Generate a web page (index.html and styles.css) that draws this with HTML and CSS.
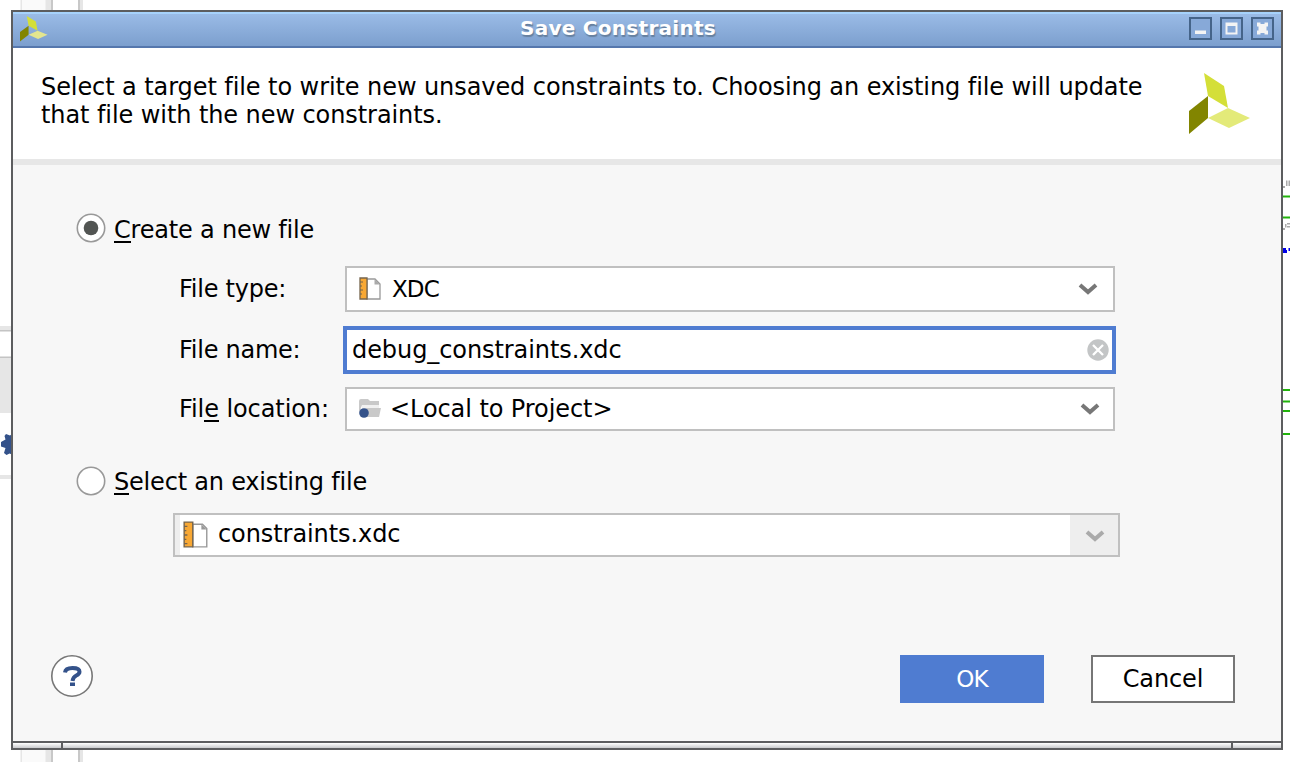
FILE: index.html
```html
<!DOCTYPE html>
<html lang="en">
<head>
<meta charset="utf-8">
<title>Save Constraints</title>
<link rel="stylesheet" href="styles.css">
</head>
<body>
<svg class="backdrop" width="1290" height="762" viewBox="0 0 1290 762" aria-hidden="true">
  <g>
    <path fill="#fafafa" d="M22 0h24v762H22z"/>
    <path fill="#e6e6e6" d="M20.500 0h1.500v762h-1.500zM45.500 0h5.500v762h-5.500zM80 0h3v762h-3z"/>
    <path fill="#c8c8c8" d="M51 0h2v762h-2zM78 0h2v762h-2z"/>
  </g>
  <path fill="#fff" d="M0 20h20v720H0z"/>
  <path fill="#e6e6e6" d="M0 326h12v4H0zM0 358h12v55H0zM0 475h12v4H0z"/>
  <path fill="#c4c4c4" d="M0 330h12v1.500H0zM0 356.500h12v1.500H0z"/>
  <path fill="#34528a" d="M12 434l-2 1.500-4-1.500-1.500 2 1 3.500L1 442v4.500l4.500 1.500-1.500 5 2.500 2 3-1.500 2.500 1z"/>
  <g fill="#22b30c">
    <path d="M1283 195.500h7v2h-7zM1283 216.500h7v2h-7zM1283 389h7v2h-7zM1283 400.500h7v2h-7zM1283 410h7v2h-7zM1283 433h7v2h-7z"/>
  </g>
  <path fill="#aaa" d="M1283 186h2v2h-2zM1286 180.500h1.500v5.500h-1.500zM1288.500 180.500h1.500v5.500h-1.500zM1283 228h2v2h-2zM1285 224h1.500v3.500h-1.500zM1287 223h3v1.500h-3zM1287 226h3v1.500h-3z"/>
  <path fill="#0000e8" d="M1283 248h3v2h1v3h-4zM1288.500 248h1.500v3h-1.500z"/>
</svg>

<main class="dialog">
  <header class="titlebar">
    <svg class="app-icon" width="28" height="26" viewBox="0 0 62 62" preserveAspectRatio="none">
      <path fill="#d4df38" d="M15 0l20 13 4 22-20-12z"/>
      <path fill="#828500" d="M0 38l19-15v22L0 61z"/>
      <path fill="#e3e68f" d="M19 45l20-10 22 10-21 10z"/>
    </svg>
    <h1 class="title">Save Constraints</h1>
    <div class="window-buttons">
      <svg width="23" height="23" viewBox="0 0 23 23"><rect class="wb" x="1" y="1" width="21" height="21"/><path fill="#f4f4f4" d="M6 13.500h11v3.500H6z"/></svg>
      <svg width="23" height="23" viewBox="0 0 23 23"><rect class="wb" x="1" y="1" width="21" height="21"/><path fill="#f4f4f4" fill-rule="evenodd" d="M5.500 5.500h12v12h-12zM7.500 9v6.500h8V9z"/></svg>
      <svg width="23" height="23" viewBox="0 0 23 23"><rect class="wb" x="1" y="1" width="21" height="21"/><path fill="#f4f4f4" d="M6 5.500h3.500V7h4V5.500H17v4h-1.500v4H17v4h-3.500V16h-4v1.500H6v-4h1.500v-4H6z"/></svg>
    </div>
  </header>

  <section class="intro">
    <p class="message"><span class="line-one">Select a target file to write new unsaved constraints to. Choosing an existing file will update</span><br>that file with the new constraints.</p>
    <svg class="logo" width="62" height="62" viewBox="0 0 62 62">
      <path fill="#d4df38" d="M15 0l20 13 4 22-20-12z"/>
      <path fill="#828500" d="M0 38l19-15v22L0 61z"/>
      <path fill="#e3ea79" d="M19 45l20-10 22 10-21 10z"/>
    </svg>
  </section>

  <section class="content">
    <label class="choice"><svg width="30" height="30" viewBox="0 0 30 30"><circle cx="15" cy="15" r="13.700" fill="#fff" stroke="#999" stroke-width="1.600"/><circle cx="15" cy="15" r="7.300" fill="#525553"/></svg><span class="choice-text"><span class="key">C</span>reate a new file</span></label>

    <div class="row row-type">
      <span class="name">File type:</span>
      <div class="combo">
        <svg class="icon" width="24" height="24" viewBox="0 0 24 24"><path fill="#fff" stroke="#999" stroke-width="1.300" d="M9 2h8l5 5v15H9z"/><path fill="#aaa" d="M16.500 2v5.500H22z"/><path fill="#f8a834" stroke="#75644c" stroke-width="1.300" d="M2 1h7v21H2z"/><path stroke="#75644c" stroke-width="1.200" d="M2 5h3M2 9h2M2 13h3M2 17h2"/></svg>
        <span class="caps">XDC</span>
        <svg class="arrow" width="20" height="14" viewBox="0 0 20 14"><path d="M2 3l8 7 8-7"/></svg>
      </div>
    </div>
    <div class="row row-name">
      <span class="name">File name:</span>
      <div class="field">
        <span class="value">debug_constraints.xdc</span>
        <svg class="clear" width="22" height="22" viewBox="0 0 22 22"><circle cx="11" cy="11" r="10.700" fill="#c3c5c6"/><path stroke="#fff" stroke-width="2.300" d="M6 6l10 10M16 6L6 16"/></svg>
      </div>
    </div>
    <div class="row row-location">
      <span class="name">Fil<span class="key">e</span> location:</span>
      <div class="combo">
        <svg class="icon" width="24" height="24" viewBox="0 0 24 24"><path fill="#c9c9c9" d="M1 4q0-2 2-2h7l2 2h9v4H4L1 16z"/><path fill="#f1f1f1" d="M4 8h17v4H4z"/><path fill="#c9c9c9" d="M8 11h15l-2 9H6z"/><circle cx="6" cy="16" r="4.800" fill="#34528a"/></svg>
        <span class="value">&lt;Local to Project&gt;</span>
        <svg class="arrow" width="20" height="14" viewBox="0 0 20 14"><path d="M2 3l8 7 8-7"/></svg>
      </div>
    </div>

    <label class="choice choice-existing"><svg width="30" height="30" viewBox="0 0 30 30"><circle cx="15" cy="15" r="13.700" fill="#fff" stroke="#999" stroke-width="1.600"/></svg><span class="choice-text"><span class="key">S</span>elect an existing file</span></label>
    <div class="combo combo-existing">
      <svg class="icon" width="26" height="28" viewBox="0 0 24 26"><path fill="#fff" stroke="#999" stroke-width="1.300" d="M9 3h9l4 4v17H9z"/><path fill="#999" d="M17 3v5h5z"/><path fill="#f8a834" stroke="#75644c" stroke-width="1.300" d="M1 1h8v23H1z"/><path stroke="#75644c" stroke-width="1.200" d="M1 5h3M1 9h2M1 13h3M1 17h2M1 21h3"/></svg>
      <span class="value">constraints.xdc</span>
      <div class="drop"><svg class="arrow" width="20" height="14" viewBox="0 0 20 14"><path d="M2 3l8 7 8-7"/></svg></div>
    </div>

    <footer class="actions">
      <svg class="help" width="44" height="44" viewBox="0 0 44 44"><circle cx="22" cy="22" r="20.200" fill="#fff" stroke="#777" stroke-width="1.600"/><path fill="none" stroke="#34528a" stroke-width="4" d="M15 18.500q.5-4.500 7.500-4.500t7 3.800q0 2.200-3.200 3.700T22.500 27"/><path fill="#34528a" d="M20 28.500h5v3.500h-5z"/></svg>
      <button class="btn btn-ok"><span class="caps">OK</span></button>
      <button class="btn btn-cancel">Cancel</button>
    </footer>
  </section>
  <div class="grip"><i></i><i></i><i></i></div>
</main>
</body>
</html>
```
FILE: styles.css
```css
* { box-sizing: border-box; }
body {
  margin: 0;
  width: 1290px;
  height: 762px;
  overflow: hidden;
  background: #fff;
  color: #000;
  font: 24px/28px "DejaVu Sans", sans-serif;
  font-variant-ligatures: none;
  letter-spacing: -0.08px;
}
svg { display: block; flex: none; }
.backdrop { position: absolute; left: 0; top: 0; }
.dialog {
  position: relative;
  display: flex;
  flex-direction: column;
  width: 1272px;
  height: 740px;
  margin: 10px 0 0 11px;
  border: 2px solid #5c5d5f;
  background: #f7f7f7;
}

.titlebar {
  display: flex;
  align-items: flex-start;
  height: 36px;
  padding: 2px 7px 0 7px;
  background: linear-gradient(#9abbe6, #7c9fce);
  border-top: 2px solid #a6d2fb;
  border-bottom: 2px solid #5577ad;
}
.title {
  flex: 1;
  margin: 0;
  padding-left: 472px;
  color: #fff;
  font-size: 20px;
  font-weight: bold;
  line-height: 24px;
  letter-spacing: 0.28px;
  text-shadow: 1px 2px 1px #66809f;
}
.window-buttons { display: flex; gap: 8px; padding-top: 1px; }
.wb { fill: #87a9d8; stroke: #456489; stroke-width: 2; }

.intro {
  display: flex;
  align-items: flex-start;
  justify-content: space-between;
  height: 117px;
  padding: 25px 30px 0 28px;
  background: #fff;
  border-bottom: 6px solid #e7e7e7;
}
.message { margin: 0; width: 1110px; white-space: nowrap; }

.content { flex: 1; padding: 48px 0 0 63px; }
.choice { display: flex; align-items: center; height: 30px; gap: 8px; }
.choice-text { padding-top: 3px; letter-spacing: -0.2px; }
.choice-existing .choice-text { padding-top: 1px; }
.key {
  display: inline-block;
  height: 25px;
  line-height: 28px;
  box-shadow: 0 2px 0 #000;
}
.row { display: flex; align-items: center; }
.row-type { margin-top: 23px; }
.row-name { margin-top: 14px; }
.row-location { margin-top: 13px; }
.name {
  width: 269px;
  padding-left: 103px;
  white-space: nowrap;
  letter-spacing: -0.25px;
}
.row-location .name { letter-spacing: -0.08px; }
.combo, .field { display: flex; align-items: center; background: #fff; }
.combo {
  width: 770px;
  height: 46px;
  padding: 0 15px 0 11px;
  border: 2px solid #c0c0c0;
  gap: 10px;
}
.caps { font-size: 23px; letter-spacing: -0.9px; }
.row-location .combo { height: 44px; padding-right: 13px; gap: 8px; }
.field {
  width: 773px;
  height: 48px;
  margin-left: -2px;
  padding: 0 3px 0 5px;
  border: 4px solid #4f7cd1;
}
.arrow { margin-left: auto; fill: none; stroke: #777; stroke-width: 4; }
.clear { margin-left: auto; }
.choice-existing { margin-top: 35px; }
.combo-existing {
  width: 947px;
  height: 44px;
  margin: 17px 0 0 97px;
  padding: 0 0 0 4px;
  box-shadow: inset 5px 0 0 #eee;
  gap: 9px;
}
.combo-existing .icon { margin-left: 4px; }
.combo-existing .value { padding-bottom: 2px; }
.drop {
  display: flex;
  align-items: center;
  width: 48px;
  height: 40px;
  margin-left: auto;
  padding: 2px 13px 0 0;
  background: #eee;
}
.drop .arrow { stroke: #aaa; }

.actions { display: flex; align-items: center; margin: 98px 46px 0 -26px; }
.help { margin: -6px auto 0 0; }
.btn {
  width: 144px;
  height: 48px;
  margin: 0;
  padding: 0;
  border: 0;
  font: inherit;
  letter-spacing: -0.1px;
}
.btn-ok { margin-right: 47px; background: #4f7cd1; color: #fff; }
.btn-cancel { background: #fff; border: 2px solid #767676; }

.grip {
  display: flex;
  gap: 2px;
  height: 7px;
  border-top: 2px solid #5c5d5f;
  background: #5c5d5f;
}
.grip i { width: 48px; background: linear-gradient(#fff, #c8c9cc); }
.grip i:nth-child(2) { flex: 1; }
```
